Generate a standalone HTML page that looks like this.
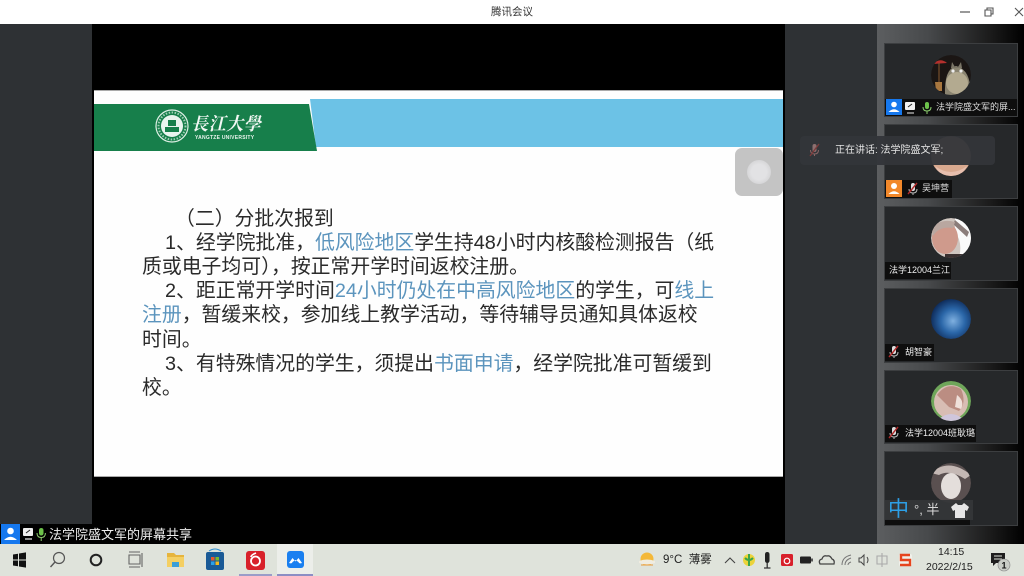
<!DOCTYPE html>
<html lang="zh"><head><meta charset="utf-8"><title>腾讯会议</title>
<style>
*{margin:0;padding:0;box-sizing:border-box}
html,body{width:1024px;height:576px;overflow:hidden;background:#000;font-family:"Liberation Sans","Noto Sans CJK SC",sans-serif}
.a{position:absolute}
.t{position:absolute;white-space:nowrap}
.l{position:absolute;white-space:nowrap;font-size:19.85px;line-height:24px;color:#2a2a2a;font-family:"Noto Sans CJK SC",sans-serif;filter:blur(.35px)}
.l b{font-weight:400;color:#5b94bd}
.l i{font-style:normal;font-family:"Liberation Sans",sans-serif}
.tile{position:absolute;left:884px;width:134px;background:#26282a;border:1px solid #3c3e40}
.lab{position:absolute;background:#0e0e0e;color:#eee;font-size:9px;line-height:17px;height:17px;white-space:nowrap}
.av{position:absolute;left:931px;width:40px;height:40px;border-radius:50%;overflow:hidden}
svg{position:absolute;display:block}
</style></head><body>
<!-- title bar -->
<div class="a" style="left:0;top:0;width:1024px;height:24px;background:#fff"></div>
<div class="t" style="left:491px;top:5px;font-size:10.5px;line-height:14px;color:#333">腾讯会议</div>
<svg style="left:955px;top:4px" width="69" height="16" viewBox="0 0 69 16"><path d="M5 8h10" stroke="#555" stroke-width="1.2"/><path d="M30 6h6v6h-6zM32 6V4h6v6h-2" fill="none" stroke="#555" stroke-width="1.1"/><path d="M60 4l8 8M68 4l-8 8" stroke="#555" stroke-width="1.1"/></svg>

<!-- stage -->
<div class="a" style="left:0;top:24px;width:92px;height:500px;background:#2e3134"></div>
<div class="a" style="left:785px;top:24px;width:92px;height:520px;background:#2e3134"></div>
<div class="a" style="left:92px;top:24px;width:693px;height:520px;background:#000"></div>
<div class="a" style="left:0;top:524px;width:785px;height:20px;background:#000"></div>
<div class="a" style="left:877px;top:24px;width:147px;height:520px;background:linear-gradient(90deg,#5c5e60 0,#47494b 35%,#1a1a1a 78%,#000 100%)"></div>

<!-- slide -->
<div class="a" style="left:94px;top:90px;width:689px;height:387px;background:#fff;box-shadow:0 0 0 1px #aaa inset"></div>
<div class="a" style="left:94px;top:91px;width:689px;height:385px;background:#fefefe"></div>
<svg style="left:94px;top:98px" width="689" height="56" viewBox="0 0 689 56"><path d="M216 1H689V49H222Z" fill="#6cc2e6"/><path d="M0 6H215L223 53H0Z" fill="#177f4b"/></svg>
<svg style="left:155px;top:109px" width="34" height="34" viewBox="0 0 34 34"><circle cx="17" cy="17" r="16" fill="none" stroke="#dff0e6" stroke-width="1.2"/><circle cx="17" cy="17" r="11" fill="#e9f4ee"/><path d="M10 18h14v5H10z" fill="#177f4b"/><path d="M13 11h8v6h-8z" fill="#177f4b"/><circle cx="17" cy="17" r="13.5" fill="none" stroke="#9fcfb4" stroke-width="2" stroke-dasharray="1.5 1.5"/></svg>
<div class="t" style="left:191px;top:111px;font-size:18px;line-height:24px;color:#f2f8f4;font-family:'Noto Serif CJK SC',serif;font-style:italic;font-weight:700;letter-spacing:.5px;transform:scaleX(.95);transform-origin:left">長江大學</div>
<div class="t" style="left:195px;top:135px;font-size:5px;line-height:7px;color:#e8f3ec;font-weight:700;letter-spacing:.25px">YANGTZE UNIVERSITY</div>

<div class="l" style="left:175px;top:205px">（二）分批次报到</div>
<div class="l" style="left:165px;top:229px"><i>1</i>、经学院批准，<b>低风险地区</b>学生持<i>48</i>小时内核酸检测报告（纸</div>
<div class="l" style="left:142px;top:253px">质或电子均可），按正常开学时间返校注册。</div>
<div class="l" style="left:165px;top:277px"><i>2</i>、距正常开学时间<b><i>24</i>小时仍处在中高风险地区</b>的学生，可<b>线上</b></div>
<div class="l" style="left:142px;top:301px"><b>注册</b>，暂缓来校，参加线上教学活动，等待辅导员通知具体返校</div>
<div class="l" style="left:142px;top:326px">时间。</div>
<div class="l" style="left:165px;top:350px"><i>3</i>、有特殊情况的学生，须提出<b>书面申请</b>，经学院批准可暂缓到</div>
<div class="l" style="left:142px;top:374px">校。</div>

<!-- floating gray button -->
<div class="a" style="left:735px;top:148px;width:48px;height:48px;border-radius:7px;background:#c4c4c4"></div>
<div class="a" style="left:747px;top:160px;width:24px;height:24px;border-radius:50%;background:radial-gradient(circle,#e2e2e4 45%,#c8c8c9 100%)"></div>

<!-- tiles -->
<div class="tile" style="top:43px;height:74px"></div>
<div class="tile" style="top:124px;height:75px"></div>
<div class="tile" style="top:206px;height:75px"></div>
<div class="tile" style="top:288px;height:75px"></div>
<div class="tile" style="top:370px;height:74px"></div>
<div class="tile" style="top:451px;height:75px"></div>

<!-- avatars -->
<svg class="av" style="top:55px" width="40" height="40" viewBox="0 0 40 40"><circle cx="20" cy="20" r="20" fill="#1b1614"/><path d="M14 40Q13 14 25 11Q37 14 39 30L36 40Z" fill="#8a8471"/><ellipse cx="26" cy="28" rx="11" ry="11" fill="#b3aa90"/><path d="M20 13l1-6 3 5h3l3-5 1 6z" fill="#7a7566"/><circle cx="22" cy="16" r="1.6" fill="#eee"/><circle cx="30" cy="16" r="1.6" fill="#eee"/><path d="M2 9Q9 2 16 8Z" fill="#b5302d"/><path d="M8 8v20" stroke="#8a5a30" stroke-width="1"/><path d="M4 27h7v9H5z" fill="#a8773f"/></svg>
<svg class="av" style="top:136px" width="40" height="40" viewBox="0 0 40 40"><circle cx="20" cy="20" r="20" fill="#d9a98f"/><path d="M4 30Q20 42 36 30L30 40H10Z" fill="#e7bfae"/></svg>
<svg class="av" style="top:218px" width="40" height="40" viewBox="0 0 40 40"><circle cx="20" cy="20" r="20" fill="#cfc6c0"/><path d="M24 0H40V40H28Q32 24 24 14Z" fill="#fafafa"/><path d="M24 2l14 12-2 5-14-13z" fill="#8b7d7a"/><ellipse cx="14" cy="20" rx="13" ry="16" fill="#cf9a8c"/><path d="M0 10Q10 0 24 4L22 10Q8 8 2 18Z" fill="#b9a7a0"/><path d="M14 36h20v4H14z" fill="#3a3030"/></svg>
<svg class="av" style="top:299px" width="40" height="40" viewBox="0 0 40 40"><defs><radialGradient id="n" cx=".55" cy=".55" r=".6"><stop offset="0" stop-color="#7fb0e0"/><stop offset=".5" stop-color="#2a66a8"/><stop offset="1" stop-color="#0b2450"/></radialGradient></defs><circle cx="20" cy="20" r="20" fill="url(#n)"/></svg>
<svg class="av" style="top:381px" width="40" height="40" viewBox="0 0 40 40"><circle cx="20" cy="20" r="20" fill="#6fa65a"/><circle cx="20" cy="21" r="17" fill="#d8bdb4"/><path d="M6 14Q16 0 30 8Q36 22 28 30L18 26Z" fill="#bb8d82"/><path d="M26 14Q34 20 30 28L24 26Z" fill="#efe0da"/><path d="M8 38Q20 28 32 38L28 40H12Z" fill="#cfc6dc"/></svg>
<svg class="av" style="top:463px" width="40" height="40" viewBox="0 0 40 40"><circle cx="20" cy="20" r="20" fill="#5a5050"/><path d="M0 10Q18-6 40 12L34 16Q18 6 8 12Z" fill="#c4b8b4"/><ellipse cx="20" cy="23" rx="10" ry="13" fill="#e4dedb"/></svg>

<!-- tile labels -->
<div class="a" style="left:885px;top:99px;width:132px;height:17px;background:#0e0e0e"></div>
<div class="a" style="left:886px;top:99px;width:16px;height:16px;background:#1678ee"></div>
<svg style="left:886px;top:99px" width="16" height="16" viewBox="0 0 16 16"><circle cx="8" cy="5.5" r="2.8" fill="#fff"/><path d="M2.5 13Q8 7.5 13.500 13Z" fill="#fff"/></svg>
<svg style="left:903px;top:100px" width="30" height="15" viewBox="0 0 30 15"><rect x="2" y="2" width="10" height="8" rx="1" fill="#f2f2f2"/><path d="M4 13h7" stroke="#eee"/><path d="M5 7l4-3" stroke="#222"/><rect x="22" y="2" width="4" height="7" rx="2" fill="#6cc24a"/><path d="M20 7q0 4 4 4t4-4M24 11v3" stroke="#8fd070" fill="none"/></svg>
<div class="t" style="left:936px;top:100px;font-size:9px;line-height:15px;color:#ddd">法学院盛文军的屏...</div>

<div class="a" style="left:885px;top:180px;width:67px;height:18px;background:#0e0e0e"></div>
<div class="a" style="left:886px;top:180px;width:16px;height:17px;background:#f2882a"></div>
<svg style="left:886px;top:180px" width="16" height="17" viewBox="0 0 16 17"><circle cx="8" cy="6" r="3" fill="#fff"/><path d="M2.500 14Q8 8.500 13.500 14Z" fill="#fff"/></svg>
<svg style="left:907px;top:182px" width="12" height="14" viewBox="0 0 12 14"><rect x="4" y="1" width="4" height="8" rx="2" fill="#ddd"/><path d="M2 7q0 4 4 4t4-4M6 11v2" stroke="#bbb" fill="none"/><path d="M10 1L1 12" stroke="#b02a2a" stroke-width="1.400"/></svg>
<div class="t" style="left:922px;top:181px;font-size:9px;line-height:15px;color:#ddd">吴坤营</div>

<div class="lab" style="left:885px;top:262px;width:66px;padding-left:4px">法学12004兰江</div>

<div class="lab" style="left:885px;top:344px;width:49px;padding-left:20px">胡智豪</div>
<svg style="left:888px;top:345px" width="12" height="14" viewBox="0 0 12 14"><rect x="4" y="1" width="4" height="8" rx="2" fill="#ddd"/><path d="M2 7q0 4 4 4t4-4M6 11v2" stroke="#bbb" fill="none"/><path d="M10 1L1 12" stroke="#b02a2a" stroke-width="1.400"/></svg>

<div class="lab" style="left:885px;top:425px;width:91px;padding-left:20px">法学12004班耿璐</div>
<svg style="left:888px;top:426px" width="12" height="14" viewBox="0 0 12 14"><rect x="4" y="1" width="4" height="8" rx="2" fill="#ddd"/><path d="M2 7q0 4 4 4t4-4M6 11v2" stroke="#bbb" fill="none"/><path d="M10 1L1 12" stroke="#b02a2a" stroke-width="1.400"/></svg>

<div class="a" style="left:885px;top:519px;width:85px;height:6px;background:#0e0e0e"></div>
<!-- IME bar -->
<div class="a" style="left:885px;top:500px;width:88px;height:20px;background:rgba(52,54,56,.92)"></div>
<div class="t" style="left:888px;top:498px;font-size:21px;line-height:24px;color:#2d9fe6">中</div>
<div class="t" style="left:914px;top:501px;font-size:13px;line-height:18px;color:#d8d8d8">°, 半</div>
<svg style="left:951px;top:503px" width="18" height="15" viewBox="0 0 18 15"><path d="M5 0L0 4l2 4 2-1v8h10V7l2 1 2-4-5-4-2 2H7z" fill="#e6e6e6"/></svg>

<!-- tooltip -->
<div class="a" style="left:800px;top:136px;width:195px;height:29px;border-radius:4px;background:rgba(51,53,57,.96)"></div>
<svg style="left:808px;top:143px" width="13" height="15" viewBox="0 0 13 15"><rect x="4.500" y="1" width="4" height="8" rx="2" fill="#8d6f6f"/><path d="M2.500 7q0 4 4 4t4-4M6.500 11v2" stroke="#8a6666" fill="none"/><path d="M11 1L2 13" stroke="#7a3a3a" stroke-width="1.400"/></svg>
<div class="t" style="left:835px;top:143px;font-size:10px;line-height:15px;color:#e4e4e4">正在讲话: 法学院盛文军;</div>

<!-- share label -->
<div class="a" style="left:1px;top:524px;width:19px;height:20px;background:#1678ee"></div>
<svg style="left:1px;top:524px" width="19" height="20" viewBox="0 0 19 20"><circle cx="9.500" cy="7" r="3.300" fill="#fff"/><path d="M3 16Q9.500 9.500 16 16Z" fill="#fff"/></svg>
<svg style="left:22px;top:527px" width="26" height="15" viewBox="0 0 26 15"><rect x="1" y="1" width="10" height="8" rx="1" fill="#eee"/><path d="M3 12h7" stroke="#eee" stroke-width="1.200"/><path d="M4 6l4-3" stroke="#222"/><rect x="17" y="1" width="4.500" height="7.500" rx="2.200" fill="#6cc24a"/><path d="M15 6q0 4.500 4.200 4.500t4.200-4.500M19.200 11v3" stroke="#8fd070" fill="none"/></svg>
<div class="t" style="left:49px;top:526px;font-size:13px;line-height:18px;color:#eee">法学院盛文军的屏幕共享</div>

<!-- taskbar -->
<div class="a" style="left:0;top:544px;width:1024px;height:32px;background:#dfe3db"></div>
<div class="a" style="left:277px;top:544px;width:36px;height:32px;background:#eceeea"></div>
<div class="a" style="left:239px;top:574px;width:33px;height:2px;background:#9a9cc8"></div>
<div class="a" style="left:277px;top:574px;width:36px;height:2px;background:#8c8ec4"></div>
<svg style="left:0;top:544px" width="320" height="32" viewBox="0 0 320 32">
<path d="M13 10.500l5-.8v5.800h-5zM19 9.500l7-1.100v7.100h-7zM13 16.500h5v5.800l-5-.8zM19 16.500h7v7.100l-7-1.100z" fill="#111"/>
<circle cx="59" cy="14" r="5.500" fill="none" stroke="#555" stroke-width="1.200"/><path d="M55 18l-4.500 5" stroke="#555" stroke-width="1.400"/>
<circle cx="96" cy="16" r="5.300" fill="none" stroke="#222" stroke-width="2"/>
<path d="M129 11h11v9h-11zM129 8h11M129 23h11M142 9v14" fill="none" stroke="#666" stroke-width="1.100"/>
<path d="M167 9h7l2 2h8v4h-17z" fill="#e6b43c"/><path d="M167 13h17v10h-17z" fill="#f4cf62"/><path d="M172 23v-5h7v5" fill="#3a9ed8"/>
<rect x="206" y="8" width="18" height="18" rx="2" fill="#1a5a96"/><path d="M209 7q6-4 12 0" fill="none" stroke="#2b8dd0"/><rect x="211" y="13" width="3.500" height="3.500" fill="#e8582c"/><rect x="215.500" y="13" width="3.500" height="3.500" fill="#7cb82c"/><rect x="211" y="17.500" width="3.500" height="3.500" fill="#2ca0e8"/><rect x="215.500" y="17.500" width="3.500" height="3.500" fill="#f4b81c"/>
<rect x="246" y="7" width="19" height="19" rx="3" fill="#d8202a"/><circle cx="255.500" cy="17" r="4.500" fill="none" stroke="#fff" stroke-width="1.800"/><path d="M256 9q-5 2-5 4" stroke="#fff" stroke-width="1.600" fill="none"/>
<rect x="287" y="7" width="17" height="17" rx="3" fill="#1a7ff0"/><path d="M289 19l3.500-5 3 3.500 3-3.500 3.500 5q-3 1-3.500-1l-3-2-3 2q-.5 2-3.500 1z" fill="#fff"/>
</svg>
<svg style="left:638px;top:551px" width="18" height="18" viewBox="0 0 18 18"><circle cx="9" cy="8" r="6.500" fill="#f4b838"/><path d="M1 10q8-3 16 0v2q-8 3-16 0z" fill="#f0ece0"/><path d="M3 14h12" stroke="#e89a3a"/></svg>
<div class="t" style="left:663px;top:552px;font-size:11.5px;line-height:16px;color:#222">9°C&nbsp;&nbsp;薄雾</div>
<svg style="left:722px;top:544px" width="210" height="32" viewBox="0 0 210 32">
<path d="M3 19l5-5 5 5" fill="none" stroke="#444" stroke-width="1.100"/>
<circle cx="27" cy="16" r="6" fill="#ecd33a"/><path d="M27 10v12M23 14q4 4 8 0" stroke="#3aa54a" stroke-width="2" fill="none"/>
<rect x="43" y="8" width="4.500" height="11" rx="2.200" fill="#222"/><path d="M45.200 19v5M42 24h6.500" stroke="#333" stroke-width="1.300"/>
<rect x="59" y="10" width="12" height="12" rx="1.500" fill="#d8202a"/><circle cx="65" cy="17" r="2.800" fill="none" stroke="#fff" stroke-width="1.200"/>
<rect x="78" y="12.500" width="11" height="7" rx="1" fill="#222"/><rect x="89" y="14.500" width="2" height="3" fill="#555"/>
<path d="M98 20q-2-4 2-5 1-4 5-3 3-1 5 3 3 1 2 5z" fill="none" stroke="#444" stroke-width="1.300"/>
<path d="M120 21q0-8 9-10M123 21q0-5 6-7M126 21q0-2 3-3" fill="none" stroke="#777" stroke-width="1"/>
<path d="M137 14h2l3-3v10l-3-3h-2zM145 13q2 3 0 6" fill="none" stroke="#444" stroke-width="1"/>
<path d="M155 12h10v8h-10zM160 9v14" fill="none" stroke="#aaa" stroke-width="1.100"/>
<rect x="177" y="10" width="13" height="12" rx="2" fill="#f0f0ea"/>
<path d="M188 11h-9v5h9v5h-10" fill="none" stroke="#e6451e" stroke-width="2.400"/>
</svg>
<div class="t" style="left:938px;top:545px;font-size:10.500px;line-height:14px;color:#222">14:15</div>
<div class="t" style="left:926px;top:560px;font-size:10.500px;line-height:14px;color:#222">2022/2/15</div>
<svg style="left:988px;top:550px" width="26" height="24" viewBox="0 0 26 24"><path d="M3 3h14v10h-9l-3 3v-3H3z" fill="#1e1e1e"/><path d="M6 6h8M6 9h8" stroke="#dfe3db"/><circle cx="16" cy="15" r="6" fill="#c9ccc6" stroke="#888" stroke-width=".6"/><text x="16" y="18.500" font-size="9" font-weight="700" text-anchor="middle" fill="#111" font-family="Liberation Sans">1</text></svg>
</body></html>
